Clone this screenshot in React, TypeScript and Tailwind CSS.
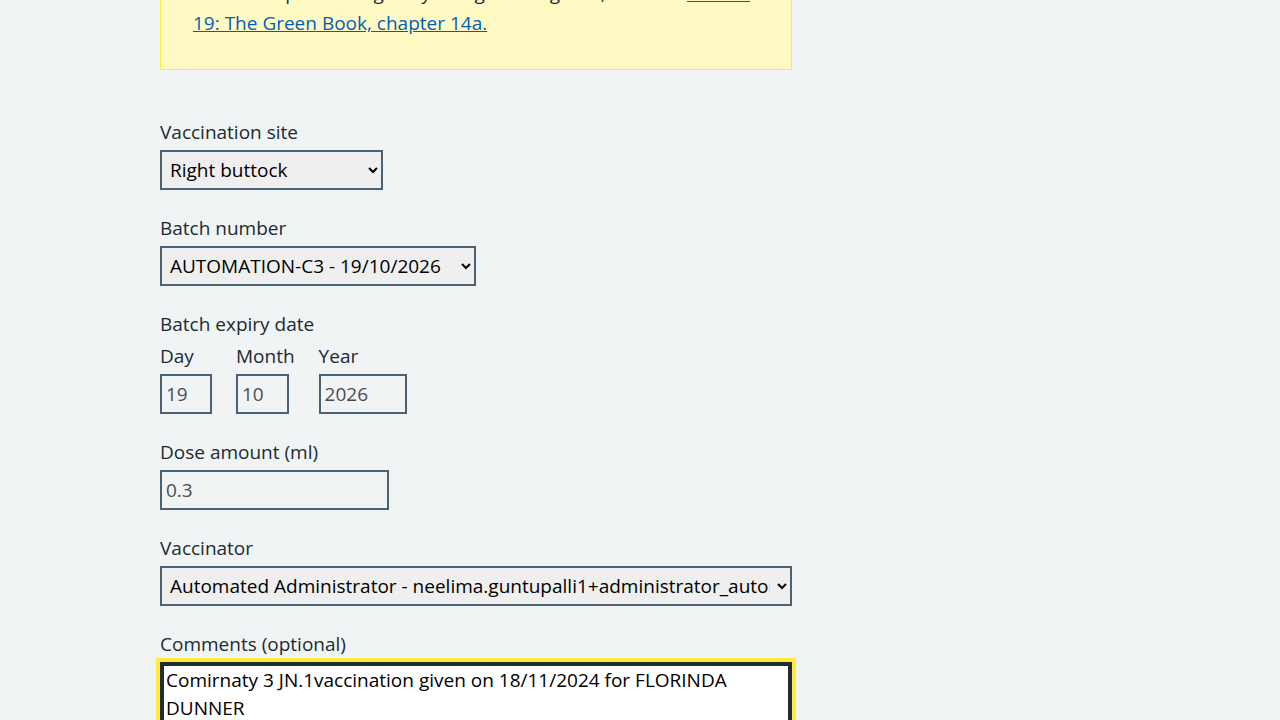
import React from 'react';

const font = { fontFamily: '"Open Sans", "Liberation Sans", sans-serif' };

const Label: React.FC<{ htmlFor?: string; children: React.ReactNode }> = ({ htmlFor, children }) => (
  <label htmlFor={htmlFor} className="block text-[19px] leading-[28px] text-[#212b32] mb-1">
    {children}
  </label>
);

const selectCls =
  'block h-10 border-2 border-[#4c6272] bg-[#efefef] pl-1 pr-1 text-[19px] text-black rounded-none';

const inputCls =
  'block h-10 border-2 border-[#4c6272] bg-transparent px-1 text-[19px] text-[#4d4d4d] rounded-none';

const App: React.FC = () => {
  return (
    <div className="min-h-screen overflow-hidden bg-[#f0f4f5]" style={font}>
      <div className="mx-auto w-[960px]">
        <div className="w-[632px]">
          {/* Care card / callout, scrolled partly out of view */}
          <div className="-mt-[52px] border border-[#ffeb3b] bg-[#fff9c4] px-8 py-8 text-[19px] leading-[28px] text-[#212b32]">
            <p className="-mt-0.5 mb-0.5 whitespace-nowrap">
              Check the patient eligibility and give as agreed, see also{' '}
              <a href="#" className="text-[#005eb8] underline">COVID-</a>
            </p>
            <p>
              <a href="#" className="text-[#005eb8] underline">19: The Green Book, chapter 14a.</a>
            </p>
          </div>

          <form className="mt-12 flex flex-col gap-6">
            <div>
              <Label htmlFor="site">Vaccination site</Label>
              <select id="site" className={`${selectCls} w-[223px]`} defaultValue="rb" style={font}>
                <option value="rb">Right buttock</option>
              </select>
            </div>

            <div>
              <Label htmlFor="batch">Batch number</Label>
              <select id="batch" className={`${selectCls} w-[316px]`} defaultValue="c3" style={font}>
                <option value="c3">AUTOMATION-C3 - 19/10/2026</option>
              </select>
            </div>

            <fieldset>
              <legend className="mb-1 text-[19px] leading-[28px] text-[#212b32]">Batch expiry date</legend>
              <div className="flex">
                <div className="mr-6">
                  <Label>Day</Label>
                  <input readOnly value="19" className={`${inputCls} w-[52px]`} style={font} />
                </div>
                <div className="mr-6">
                  <Label>Month</Label>
                  <input readOnly value="10" className={`${inputCls} w-[53px]`} style={font} />
                </div>
                <div>
                  <Label>Year</Label>
                  <input readOnly value="2026" className={`${inputCls} w-[88px]`} style={font} />
                </div>
              </div>
            </fieldset>

            <div>
              <Label htmlFor="dose">Dose amount (ml)</Label>
              <input id="dose" readOnly value="0.3" className={`${inputCls} w-[229px]`} style={font} />
            </div>

            <div>
              <Label htmlFor="vaccinator">Vaccinator</Label>
              <select id="vaccinator" className={`${selectCls} w-full`} defaultValue="a" style={font}>
                <option value="a">Automated Administrator - neelima.guntupalli1+administrator_automation@nhs.net</option>
              </select>
            </div>

            <div>
              <Label htmlFor="comments">Comments (optional)</Label>
              <textarea
                id="comments"
                rows={4}
                defaultValue="Comirnaty 3 JN.1vaccination given on 18/11/2024 for FLORINDA DUNNER"
                className="block w-full resize-none border-2 border-[#212b32] bg-white px-1 pt-0.5 text-[19px] leading-[28px] text-black shadow-[inset_0_0_0_2px_#212b32] outline-4 outline-[#ffeb3b]"
                style={font}
              />
            </div>
          </form>
        </div>
      </div>
    </div>
  );
};

export default App;
